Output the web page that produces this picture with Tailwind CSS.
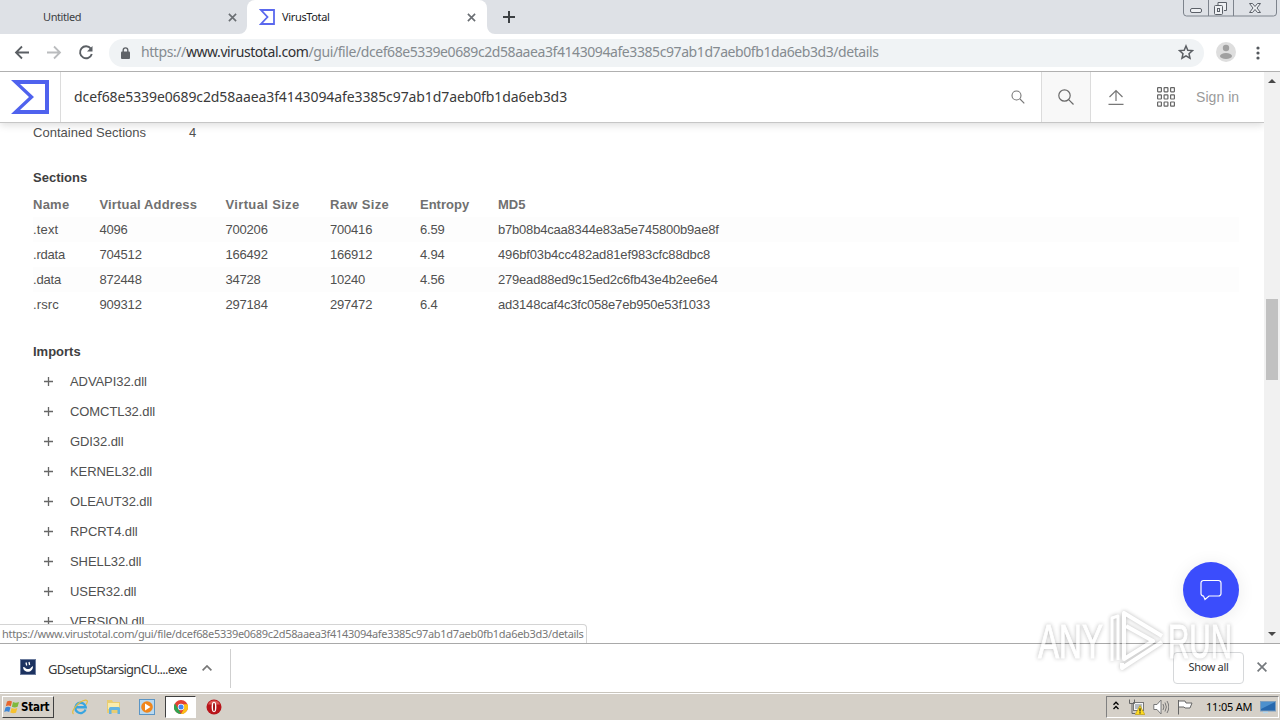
<!DOCTYPE html>
<html lang="en">
<head>
    <meta charset="UTF-8">
    <meta name="viewport" content="width=device-width, initial-scale=1.0">
    <title>VirusTotal</title>
    <script src="https://cdn.jsdelivr.net/npm/@tailwindcss/browser@4"></script>
</head>
<body class="w-[1280px] h-[720px] overflow-hidden flex flex-col bg-white font-['Noto_Sans',sans-serif] text-[#3c4043] whitespace-nowrap">

    <!-- Tab strip -->
    <div class="h-[34px] shrink-0 bg-[#dee1e6] flex relative">
        <div class="w-[247px] flex items-center justify-between pl-[43px] pr-[10px] rounded-br-lg">
            <span class="text-[11px] tracking-[-0.4px] text-[#3c4043]">Untitled</span>
            <svg class="w-[9px] h-[9px]" viewBox="0 0 10 10" stroke="#6a6e73" stroke-width="1.800"><path d="M1 1l8 8M9 1l-8 8" /></svg>
        </div>
        <div class="relative w-[240px] bg-white rounded-t-lg flex items-center pl-3 pr-[11px]">
            <svg class="w-4 h-4 shrink-0" viewBox="0 0 16 16" fill="none" stroke="#5a68ee" stroke-width="1.800"><path d="M2 1h13v14H2l6.500-7z" /></svg>
            <span class="text-[11px] tracking-[-0.35px] ml-[7px] grow text-[#202124]">VirusTotal</span>
            <svg class="w-[9px] h-[9px]" viewBox="0 0 10 10" stroke="#6a6e73" stroke-width="1.800"><path d="M1 1l8 8M9 1l-8 8" /></svg>
            <svg class="absolute -left-2 bottom-0 w-2 h-2" viewBox="0 0 8 8" fill="#fff"><path d="M8 0v8H0a8 8 0 0 0 8-8z" /></svg>
            <svg class="absolute -right-2 bottom-0 w-2 h-2" viewBox="0 0 8 8" fill="#fff"><path d="M0 0v8h8a8 8 0 0 1-8-8z" /></svg>
        </div>
        <svg class="w-3 h-3 mt-[11px] ml-4" viewBox="0 0 12 12" stroke="#3c4043" stroke-width="2"><path d="M6 0v12M0 6h12" /></svg>
        <!-- Window buttons -->
        <svg class="absolute right-[3px] top-0 w-[94px] h-[17px]" viewBox="0 0 94 17" fill="none" stroke="#7d838c">
            <path d="M.5 0v13q0 3 3 3h87q3 0 3-3V0M25.500 0v16M50.500 0v16" />
            <g stroke="#5b6068">
                <rect x="7.500" y="8.500" width="11" height="4" rx="1.500" fill="#eef0f3" />
                <path d="M35 5V2.500h8.500v8h-2.500" fill="#eef0f3" />
                <rect x="31.500" y="5.500" width="8" height="9" rx="1" fill="#eef0f3" />
                <rect x="34.500" y="8.500" width="2" height="3" />
                <path d="M66.500 3.500h3l2.500 3 2.500-3h3l-3.500 4.500 3.500 4.500h-3l-2.500-3-2.500 3h-3l3.500-4.500z" fill="#eef0f3" />
            </g>
        </svg>
    </div>

    <!-- Toolbar -->
    <div class="h-[37px] shrink-0 flex items-center">
        <svg class="w-4 h-4 ml-[14px]" viewBox="0 0 16 16" fill="none" stroke="#5b5f64" stroke-width="1.800"><path d="M15 7.500H2M8 1.500L2 7.500l6 6" /></svg>
        <svg class="w-4 h-4 ml-4" viewBox="0 0 16 16" fill="none" stroke="#babcbe" stroke-width="1.800"><path d="M1 7.500h13M8 1.500l6 6-6 6" /></svg>
        <svg class="w-4 h-4 ml-4" viewBox="0 0 16 16" fill="none" stroke="#5b5f64" stroke-width="1.900"><path d="M12.800 3.600A6 6 0 1 0 13.800 9" /><path d="M14.500 1v5.500H9z" fill="#5b5f64" stroke="none" /></svg>
        <div class="w-[1095px] h-7 ml-[15px] rounded-full bg-[#f0f3f5] flex items-center pl-3 pr-[10px]">
            <svg class="w-[9px] h-3 shrink-0" viewBox="0 0 9 12"><path d="M2.200 5V3.200a2.300 2.300 0 0 1 4.600 0V5" fill="none" stroke="#5f6368" stroke-width="1.400" /><rect y="4.500" width="9" height="7.500" rx="1" fill="#5f6368" /></svg>
            <span class="grow ml-[11px] pb-[2px] text-[14px] tracking-[-0.42px] text-[#858b90]">https://<span class="text-[#303134]">www.virustotal.com</span>/gui/file/dcef68e5339e0689c2d58aaea3f4143094afe3385c97ab1d7aeb0fb1da6eb3d3/details</span>
            <svg class="w-4 h-4 -mt-[2px]" viewBox="0 0 16 16" fill="none" stroke="#5b5f64" stroke-width="1.500"><path d="M8 2l1.800 4.200 4.700.4-3.500 3.100 1 4.500L8 11.800l-4 2.400 1-4.500L1.500 6.600l4.700-.4z" /></svg>
        </div>
        <svg class="w-5 h-5 ml-3 -mt-px" viewBox="0 0 20 20"><circle cx="10" cy="10" r="10" fill="#dedede" /><circle cx="10" cy="6" r="3.200" fill="#a0a0a0" /><ellipse cx="10" cy="14" rx="6" ry="3" fill="#a0a0a0" /></svg>
        <svg class="w-1 h-[14px] ml-[20px]" viewBox="0 0 4 14" fill="#55595e"><circle cx="2" cy="2" r="1.600" /><circle cx="2" cy="7" r="1.600" /><circle cx="2" cy="12" r="1.600" /></svg>
    </div>

    <!-- Page -->
    <div class="h-[572px] shrink-0 border-t border-[#b0b0b0] flex relative">
        <main class="w-[1264px] flex flex-col overflow-hidden">
            <header class="h-[51px] shrink-0 relative z-10 bg-white border-b border-[#c6c6c6] shadow-[0_2px_8px_rgba(0,0,0,0.14)] flex items-center">
                <div class="w-[61px] h-full border-r border-[#dcdcdc] flex items-center pl-[10px]">
                    <svg class="w-10 h-[34px]" viewBox="0 0 40 34"><path d="M1 0h38v34H1l18-17zM10 4l14 13-14 13h25V4z" fill="#4f62ee" fill-rule="evenodd" /></svg>
                </div>
                <span class="grow pl-[13px] pb-[2px] text-[14px] tracking-[-0.1px] text-[#3a3a3a]">dcef68e5339e0689c2d58aaea3f4143094afe3385c97ab1d7aeb0fb1da6eb3d3</span>
                <svg class="w-[14px] h-[14px] mr-[16px]" viewBox="0 0 14 14" fill="none" stroke="#777" stroke-width="1.100"><circle cx="5.500" cy="5.500" r="4.500" /><path d="M9 9l4.300 4.300" /></svg>
                <div class="w-[50px] h-full bg-[#f8f8f8] border-x border-[#dcdcdc] flex items-center justify-center">
                    <svg class="w-4 h-4" viewBox="0 0 16 16" fill="none" stroke="#6a6a6a" stroke-width="1.200"><circle cx="6.500" cy="6.500" r="5.700" /><path d="M10.700 10.700l4.800 4.800" /></svg>
                </div>
                <svg class="w-4 h-4 ml-[17px]" viewBox="0 0 16 16" fill="none" stroke="#777" stroke-width="1.200"><path d="M8 12V2M1.500 8L8 1.500 14.500 8M.5 15.400h15" /></svg>
                <svg class="w-[18px] h-[20px] ml-[33px]" viewBox="0 0 18 20" fill="none" stroke="#666" stroke-width="1.200">
                    <rect x=".6" y=".6" width="3.800" height="4.200" rx=".5" /><rect x="7.100" y=".6" width="3.800" height="4.200" rx=".5" /><rect x="13.600" y=".6" width="3.800" height="4.200" rx=".5" />
                    <rect x=".6" y="7.800" width="3.800" height="4.200" rx=".5" /><rect x="7.100" y="7.800" width="3.800" height="4.200" rx=".5" /><rect x="13.600" y="7.800" width="3.800" height="4.200" rx=".5" />
                    <rect x=".6" y="15" width="3.800" height="4.200" rx=".5" /><rect x="7.100" y="15" width="3.800" height="4.200" rx=".5" /><rect x="13.600" y="15" width="3.800" height="4.200" rx=".5" />
                </svg>
                <span class="w-[68px] ml-[21px] font-['Liberation_Sans',sans-serif] text-[14px] tracking-[0.05px] text-[#9a9a9a]">Sign in</span>
            </header>

            <div class="pl-[33px] pr-[25px] font-['Liberation_Sans',sans-serif] text-[13px] leading-[25px] text-[#505050]">
                <div class="flex -mt-[3px]">
                    <span class="w-[156px] tracking-[0.02px]">Contained Sections</span>
                    <span>4</span>
                </div>
                <h3 class="mt-5 mb-[2px] font-bold text-[#404040]">Sections</h3>
                <div class="grid grid-cols-[66.500px_126px_104.500px_90px_78px_1fr] font-bold text-[#707070]">
                    <span class="tracking-[0.25px]">Name</span><span class="tracking-[0.15px]">Virtual Address</span><span class="tracking-[0.35px]">Virtual Size</span><span class="tracking-[0.35px]">Raw Size</span><span>Entropy</span><span>MD5</span>
                </div>
                <div class="grid grid-cols-[66.500px_126px_104.500px_90px_78px_1fr] tracking-[-0.2px] bg-[#fdfdfd]">
                    <span class="tracking-[0.15px]">.text</span><span>4096</span><span>700206</span><span>700416</span><span>6.59</span><span>b7b08b4caa8344e83a5e745800b9ae8f</span>
                </div>
                <div class="grid grid-cols-[66.500px_126px_104.500px_90px_78px_1fr] tracking-[-0.2px]">
                    <span>.rdata</span><span>704512</span><span>166492</span><span>166912</span><span>4.94</span><span class="tracking-[-0.150px]">496bf03b4cc482ad81ef983cfc88dbc8</span>
                </div>
                <div class="grid grid-cols-[66.500px_126px_104.500px_90px_78px_1fr] tracking-[-0.2px] bg-[#fdfdfd]">
                    <span>.data</span><span>872448</span><span>34728</span><span>10240</span><span>4.56</span><span>279ead88ed9c15ed2c6fb43e4b2ee6e4</span>
                </div>
                <div class="grid grid-cols-[66.500px_126px_104.500px_90px_78px_1fr] tracking-[-0.2px]">
                    <span class="tracking-[0.1px]">.rsrc</span><span>909312</span><span>297184</span><span>297472</span><span>6.4</span><span>ad3148caf4c3fc058e7eb950e53f1033</span>
                </div>
                <h3 class="mt-[22px] mb-[2px] font-bold text-[#404040]">Imports</h3>
                <ul id="imports" class="leading-[30px]"></ul>
            </div>
        </main>

        <!-- Scrollbar -->
        <div class="w-4 bg-[#f1f1f1] flex flex-col items-center">
            <svg class="w-2 h-1 mt-[7px]" viewBox="0 0 8 4" fill="#484848"><path d="M4 0l4 4H0z" /></svg>
            <div class="w-3 h-[81px] mt-[216px] bg-[#c1c1c1]"></div>
            <svg class="w-2 h-1 mt-auto mb-[7px]" viewBox="0 0 8 4" fill="#484848"><path d="M0 0h8L4 4z" /></svg>
        </div>

        <!-- Chat button -->
        <div class="absolute left-[1183px] top-[490px] w-14 h-14 rounded-full bg-[#3b4dfc] shadow-[0_2px_18px_rgba(0,0,0,0.08)] flex items-center justify-center">
            <svg class="w-[22px] h-[22px]" viewBox="0 0 22 22" fill="none" stroke="#fff" stroke-width="1.200"><path d="M3.500 1.500h15a2.500 2.500 0 0 1 2.500 2.500v10.500a2.500 2.500 0 0 1-2.500 2.500H9l-4 3.500L3.500 17A2.500 2.500 0 0 1 1 14.500V4a2.500 2.500 0 0 1 2.500-2.500z" /></svg>
        </div>

        <!-- Link status -->
        <div class="absolute left-0 bottom-0 w-[587px] h-[19px] bg-white border-t border-r border-[#d4d4d4] rounded-tr-sm pl-[2px] text-[11px] leading-[18px] tracking-[-0.31px] text-[#777]">https://www.virustotal.com/gui/file/dcef68e5339e0689c2d58aaea3f4143094afe3385c97ab1d7aeb0fb1da6eb3d3/details</div>
    </div>

    <!-- Downloads -->
    <div class="h-[49px] shrink-0 border-t border-[#a9a9a9] flex items-center">
        <svg class="w-4 h-4 ml-5 mb-[2px]" viewBox="0 0 16 16"><rect x=".5" y=".5" width="15" height="15" fill="#1c3260" stroke="#6b7b9c" /><path d="M3 8l2 .5c1 2 5 2 6 0L13 7c.3 7.500-9.700 7.500-10 1z" fill="#fff" /><path d="M6 3.500l.7 3M9 3l.6 3" stroke="#fff" stroke-width="1.300" /></svg>
        <span class="ml-3 w-[140px] pt-[3px] text-[13px] tracking-[-0.71px] text-[#3a3a3a]">GDsetupStarsignCU....exe</span>
        <svg class="w-[10px] h-[6px] ml-[14px]" viewBox="0 0 10 6" fill="none" stroke="#777" stroke-width="1.700"><path d="M.6 5.400L5 1l4.400 4.400" /></svg>
        <div class="w-px h-[39px] ml-[18px] bg-[#cfcfcf]"></div>
        <div class="w-[71px] h-8 ml-auto mb-px rounded border border-[#d6d8da] flex items-center justify-center text-[11px] tracking-[-0.35px] text-[#333]">Show all</div>
        <svg class="w-[10px] h-[10px] ml-[13px] mr-[13px] mb-[2px]" viewBox="0 0 10 10" stroke="#75797d" stroke-width="1.700"><path d="M.6.6l8.800 8.800M9.400.6L.6 9.400" /></svg>
    </div>

    <!-- Taskbar -->
    <footer class="h-7 shrink-0 bg-[#d5d0c8] border-t border-[#c9c5bd] shadow-[inset_0_1px_0_#fff] flex items-center text-black">
        <div class="w-[52px] h-[22px] ml-[2px] mt-px bg-[#d5d0c8] border border-t-white border-l-white border-r-[#404040] border-b-[#404040] flex items-center">
            <svg class="w-4 h-4 ml-px shrink-0" viewBox="0 0 16 16">
                <path d="M3 2.500q2.500-1.500 5 0L6.800 7.300q-2.400-1.500-5 0z" fill="#e8662c" />
                <path d="M9 3q2.500 1.300 6 0l-1.400 4.800q-3 1.200-5.700-.1z" fill="#7fb93c" />
                <path d="M1.500 8.500q2.500-1.500 5 0L5.200 13q-2.400-1.400-5 0z" fill="#3d86d6" />
                <path d="M7.600 9q2.600 1.200 5.700.1L12 13.800q-3 1-5.700-.2z" fill="#f6c12e" />
            </svg>
            <span class="ml-px pt-px font-['DejaVu_Sans_Condensed','DejaVu_Sans',sans-serif] font-stretch-condensed font-bold text-[11.500px] tracking-[-0.25px]">Start</span>
        </div>
        <svg class="w-4 h-4 ml-[18px]" viewBox="0 0 16 16" fill="none"><path d="M13.500 10.500a5.200 5.200 0 1 1 .2-2.300H4" stroke="#39a5e0" stroke-width="2.400" /><path d="M1.500 15C-2 12 7 2 13.500 1.200c3-.2 1.700 3 .5 4.300" stroke="#e4bd3e" stroke-width="1.200" /></svg>
        <svg class="w-4 h-4 ml-[18px]" viewBox="0 0 16 16"><path d="M1 1h5l1 2h7v11H1z" fill="#e9cd72" /><path d="M2 4h11v6H2z" fill="#f9ecad" /><path d="M3 15V9.500q0-1.500 1.500-1.500h8q1.500 0 1.500 1.500V15h-2.500v-4h-6v4z" fill="#62b3e2" /></svg>
        <svg class="w-4 h-4 ml-[17px]" viewBox="0 0 16 16"><rect x=".5" y=".5" width="15" height="15" fill="#b9d9f0" stroke="#5b95c5" /><circle cx="8" cy="8" r="5.800" fill="#f0861c" /><path d="M6 4.500l5.500 3.500L6 11.500z" fill="#fff" /></svg>
        <div class="w-[31px] h-[22px] ml-[10px] bg-white border border-t-[#404040] border-l-[#404040] border-r-white border-b-white flex items-center justify-center">
            <svg class="w-[14px] h-[14px]" viewBox="0 0 14 14"><circle cx="7" cy="7" r="7" fill="#e34133" /><path d="M.9 3.500L4.200 8.800 7 14A7 7 0 0 1 .9 3.500z" fill="#2fa350" /><path d="M7 14l3-5.300L9.500 4.200h3.900A7 7 0 0 1 7 14z" fill="#fbc116" /><circle cx="7" cy="7" r="3.200" fill="#fff" /><circle cx="7" cy="7" r="2.500" fill="#4385f3" /></svg>
        </div>
        <svg class="w-4 h-4 ml-[10px]" viewBox="0 0 16 16"><circle cx="8" cy="8" r="7.500" fill="#b8141a" /><path d="M2 5.500a6.500 6.500 0 0 1 12 0z" fill="#dc5553" /><ellipse cx="8" cy="8" rx="2.400" ry="5.200" fill="#fff" /><ellipse cx="8" cy="8" rx="1" ry="4.200" fill="#a01015" /></svg>
        <!-- Tray -->
        <div class="w-[173px] h-[22px] ml-auto mr-px mt-px border border-t-[#808080] border-l-[#808080] border-r-white border-b-white flex items-center">
            <svg class="w-[6px] h-[9px] ml-[6px] mb-[3px]" viewBox="0 0 6 9" fill="none" stroke="#000" stroke-width="1.300"><path d="M.5 3.700L3 1.200l2.500 2.500M.5 8L3 5.500 5.500 8" /></svg>
            <svg class="w-4 h-4 ml-[10px]" viewBox="0 0 16 16"><rect x="4.500" y="3.500" width="10" height="8" fill="#f5f5f5" stroke="#777" /><rect x="6" y="5" width="7" height="5" fill="#b5bcc2" /><path d="M.5.5v4h5v-4M3 4.500v10h3" fill="none" stroke="#666" /><path d="M11 6.500l4.800 9H6.200z" fill="#ffdc22" stroke="#b39200" stroke-width=".6" /><path d="M11 9.200v3.300M11 13.300v1.200" stroke="#222" stroke-width="1.200" /></svg>
            <svg class="w-4 h-4 ml-2" viewBox="0 0 16 16" fill="#fff" stroke="#777"><path d="M.8 5.500H4l4-4.500v14l-4-4.500H.8z" /><path d="M10 5q1.800 3 0 6M12 3.500q2.800 4.500 0 9M14 2q3.600 6 0 12" fill="none" /></svg>
            <svg class="w-4 h-4 ml-2" viewBox="0 0 16 16" fill="#fff" stroke="#666"><path d="M1.500 1v14.500M1.500 2H8l1 2h6l-2 5H8L7 8H1.500z" /></svg>
            <span class="ml-[13px] w-[46px] text-[11px] tracking-[-0.2px]">11:05 AM</span>
            <svg class="w-4 h-[13px] ml-[8px]" viewBox="0 0 16 13"><rect x=".5" y=".5" width="15" height="9.500" fill="#2768ae" stroke="#7e9ebd" /><path d="M1 1h14L1 8z" fill="#4d90cd" /><path d="M3 11.500h5" stroke="#b5d8ee" stroke-width="1.500" /></svg>
        </div>
    </footer>

    <!-- Recorder watermark -->
    <svg class="absolute left-[1030px] top-[602px] w-[214px] h-[90px] drop-shadow-[0_0_2px_rgba(0,0,0,0.45)] opacity-60" viewBox="0 0 214 90" fill="#fff" font-family="Liberation Sans, sans-serif" font-size="48">
        <text x="8" y="56" textLength="65" lengthAdjust="spacingAndGlyphs" stroke="#fff">ANY</text>
        <g fill="none" stroke="#fff" stroke-width="4" stroke-linejoin="round">
            <path d="M82 59V16l6-2v44" stroke-width="3" />
            <path d="M132 34L94 11v46l29-18-27-15" />
            <path d="M132 40L92 66v-5" />
        </g>
        <text x="138" y="56" textLength="64" lengthAdjust="spacingAndGlyphs" stroke="#fff">RUN</text>
    </svg>

    <script>
        const dlls = ['ADVAPI32', 'COMCTL32', 'GDI32', 'KERNEL32', 'OLEAUT32', 'RPCRT4', 'SHELL32', 'USER32', 'VERSION'];
        document.getElementById('imports').innerHTML = dlls.map(name => `
            <li class="h-[30px] flex items-center pl-[11px]">
                <svg class="w-[9px] h-[9px] mr-[17px]" viewBox="0 0 9 9" stroke="#666" stroke-width="1.300"><path d="M4.500 0v9M0 4.500h9" /></svg>
                <span class="pt-[2px] tracking-[-0.08px]">${name}.dll</span>
            </li>`).join('');
    </script>
</body>
</html>
